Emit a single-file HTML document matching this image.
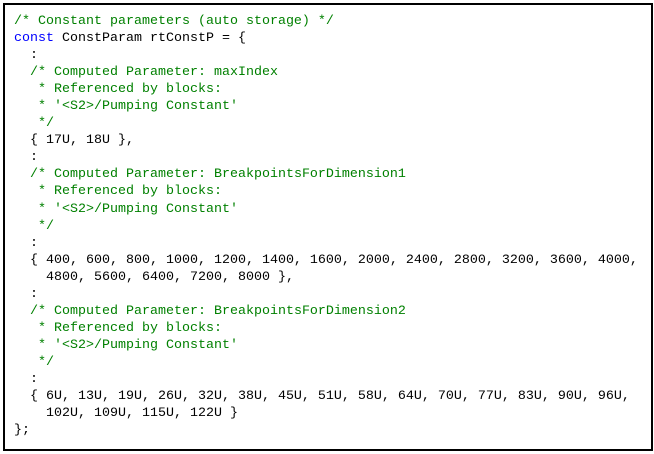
<!DOCTYPE html>
<html><head><style>
html,body{margin:0;padding:0;background:#fff;}
body{width:654px;height:454px;position:relative;overflow:hidden;}
.box{position:absolute;left:3px;top:3px;width:646px;height:444px;border:2px solid #000;}
pre{position:absolute;left:14px;top:13px;margin:0;font-family:"Liberation Mono",monospace;font-size:13.33px;line-height:17.04px;color:#000;}
.c{color:#008000}.k{color:#0000ff}
</style></head><body>
<div class="box"></div>
<pre><span class="c">/* Constant parameters (auto storage) */</span>
<span class="k">const</span> ConstParam rtConstP = {
  :
  <span class="c">/* Computed Parameter: maxIndex
   * Referenced by blocks:
   * '&lt;S2&gt;/Pumping Constant'
   */</span>
  { 17U, 18U },
  :
  <span class="c">/* Computed Parameter: BreakpointsForDimension1
   * Referenced by blocks:
   * '&lt;S2&gt;/Pumping Constant'
   */</span>
  :
  { 400, 600, 800, 1000, 1200, 1400, 1600, 2000, 2400, 2800, 3200, 3600, 4000,
    4800, 5600, 6400, 7200, 8000 },
  :
  <span class="c">/* Computed Parameter: BreakpointsForDimension2
   * Referenced by blocks:
   * '&lt;S2&gt;/Pumping Constant'
   */</span>
  :
  { 6U, 13U, 19U, 26U, 32U, 38U, 45U, 51U, 58U, 64U, 70U, 77U, 83U, 90U, 96U,
    102U, 109U, 115U, 122U }
};</pre>
</body></html>
